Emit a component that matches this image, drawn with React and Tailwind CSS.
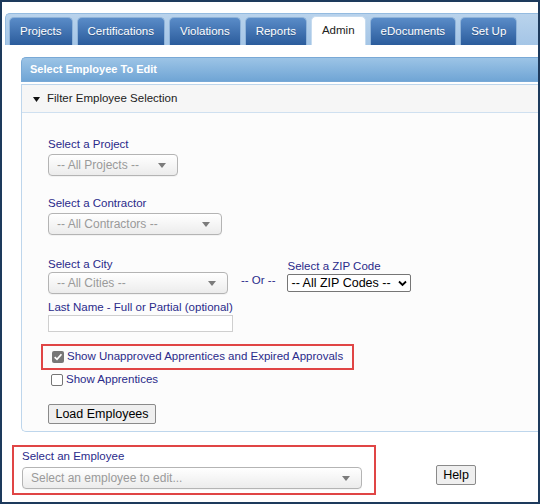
// Admin > Select Employee To Edit screen
const tabs = ["Projects", "Certifications", "Violations", "Reports", "Admin", "eDocuments", "Set Up"];

function Caret() {
  return (
    <svg width="8" height="5" viewBox="0 0 8 5" className="shrink-0">
      <path d="M0 0 L8 0 L4 5 Z" fill="#7b7b7b" />
    </svg>
  );
}

function FancySelect({ width, text }) {
  return (
    <div
      className="flex h-[22px] items-center justify-between rounded-[4px] border border-[#b4b4b4] bg-gradient-to-b from-[#ffffff] to-[#ececec] pl-[8px] pr-[11px] text-[12px] text-[#9a9a9a] shadow-[0_1px_0_rgba(0,0,0,0.04)]"
      style={{ width }}
    >
      <span className="truncate">{text}</span>
      <Caret />
    </div>
  );
}

function Label({ children, className = "" }) {
  return <div className={`h-[14px] text-[11.5px] leading-[14px] text-[#2a2a8a] ${className}`}>{children}</div>;
}

function CheckBox({ checked }) {
  if (checked) {
    return (
      <span className="flex h-[12px] w-[12px] items-center justify-center rounded-[2px] bg-[#777777]">
        <svg width="10" height="10" viewBox="0 0 9 9">
          <path d="M1.5 4.6 L3.6 6.6 L7.6 2" fill="none" stroke="#fff" strokeWidth="1.6" />
        </svg>
      </span>
    );
  }
  return <span className="h-[12px] w-[12px] rounded-[2px] border border-[#767676] bg-white" />;
}

export default function App() {
  return (
    <div className="h-[504px] w-[540px] overflow-hidden border-2 border-[#1d3a5c] bg-white font-['Liberation_Sans',Arial,sans-serif]">
      {/* tab strip */}
      <div className="ml-[3px] mt-[11px] flex h-[32px] items-end gap-[4px] rounded-tl-[5px] border border-r-0 border-b-0 border-[#94bbe0] bg-gradient-to-b from-[#b9d3ec] to-[#a4c5e6] pl-[3px]">
        {tabs.map((t) =>
          t === "Admin" ? (
            <div
              key={t}
              className="flex h-[29px] items-center rounded-t-[5px] border border-b-0 border-[#c6dbef] bg-white px-[10px] text-[11.5px] text-[#222]"
            >
              {t}
            </div>
          ) : (
            <div
              key={t}
              className="flex h-[28px] items-center rounded-t-[5px] border border-b-0 border-[#8fb3d9] bg-gradient-to-b from-[#5a8cc8] to-[#2b5c9c] px-[10px] text-[11.5px] text-white [text-shadow:0_1px_0_rgba(0,0,0,0.25)]"
            >
              {t}
            </div>
          )
        )}
      </div>

      <div className="ml-[19px] mt-[12px]">
        {/* header bar */}
        <div className="flex h-[25px] items-center rounded-tl-[5px] border border-r-0 border-[#79a9d6] bg-gradient-to-b from-[#9cc4e6] to-[#70a5d5] pl-[8px] text-[11px] font-bold text-white">
          Select Employee To Edit
        </div>

        {/* filter panel */}
        <div className="mt-[2px] h-[348px] rounded-bl-[5px] border border-r-0 border-[#bed6ec] bg-[#fcfcfc]">
          <div className="flex h-[28px] items-center border-b border-[#cfe0f0] bg-[#f6f6f6] pl-[11px] pt-[1px] text-[11.5px] text-[#222]">
            <svg width="7" height="5" viewBox="0 0 7 5" className="mr-[7px]">
              <path d="M0 0 L7 0 L3.5 5 Z" fill="#111" />
            </svg>
            Filter Employee Selection
          </div>

          <div className="pl-[26px] pt-[24px]">
            <Label>Select a Project</Label>
            <div className="mt-[3px]">
              <FancySelect width={130} text="-- All Projects --" />
            </div>

            <Label className="mt-[20px]">Select a Contractor</Label>
            <div className="mt-[3px]">
              <FancySelect width={174} text="-- All Contractors --" />
            </div>

            <div className="mt-[22px] flex items-start">
              <div>
                <Label>Select a City</Label>
                <div className="mt-[1px]">
                  <FancySelect width={180} text="-- All Cities --" />
                </div>
              </div>
              <div className="ml-[13px] mt-[16px] text-[11.5px] leading-[14px] text-[#2a2a8a]">-- Or --</div>
              <div className="ml-[12px] mt-[2px]">
                <Label>Select a ZIP Code</Label>
                <div className="mt-[1px] flex h-[18px] w-[124px] items-center justify-between rounded-[2px] border border-[#767676] bg-white pl-[3px] pr-[3px] text-[12.5px] text-black">
                  <span>-- All ZIP Codes --</span>
                  <svg width="9" height="7" viewBox="0 0 9 7">
                    <path d="M1 1.5 L4.5 5 L8 1.5" fill="none" stroke="#000" strokeWidth="1.8" />
                  </svg>
                </div>
              </div>
            </div>

            <Label className="mt-[6px]">Last Name - Full or Partial (optional)</Label>
            <div className="mt-[1px] h-[17px] w-[185px] border border-[#cfcfcf] bg-white" />

            <div className="-ml-[7px] mt-[12px] flex h-[26px] w-[313px] items-center gap-[3px] border-2 border-[#e04545] pl-[9px] text-[11.5px] text-[#2a2a8a]">
              <CheckBox checked />
              <span>Show Unapproved Apprentices and Expired Approvals</span>
            </div>
            <div className="ml-[3px] mt-[2px] flex h-[16px] items-center gap-[3px] text-[11.5px] text-[#2a2a8a]">
              <CheckBox />
              <span>Show Apprentices</span>
            </div>

            <button className="mt-[16px] flex h-[20px] w-[108px] items-center justify-center rounded-[2px] border border-[#8a8a8a] bg-[#efefef] text-[12.5px] text-black">
              Load Employees
            </button>
          </div>
        </div>
      </div>

      {/* bottom employee picker */}
      <div className="ml-[10px] mt-[13px] flex items-start">
        <div className="h-[50px] w-[364px] border-2 border-[#e04545] pl-[8px] pt-[2px]">
          <Label>Select an Employee</Label>
          <div className="mt-[4px]">
            <FancySelect width={340} text="Select an employee to edit..." />
          </div>
        </div>
        <button className="ml-[60px] mt-[20px] flex h-[20px] w-[40px] items-center justify-center rounded-[2px] border border-[#8a8a8a] bg-[#efefef] text-[12.5px] text-black">
          Help
        </button>
      </div>
    </div>
  );
}
